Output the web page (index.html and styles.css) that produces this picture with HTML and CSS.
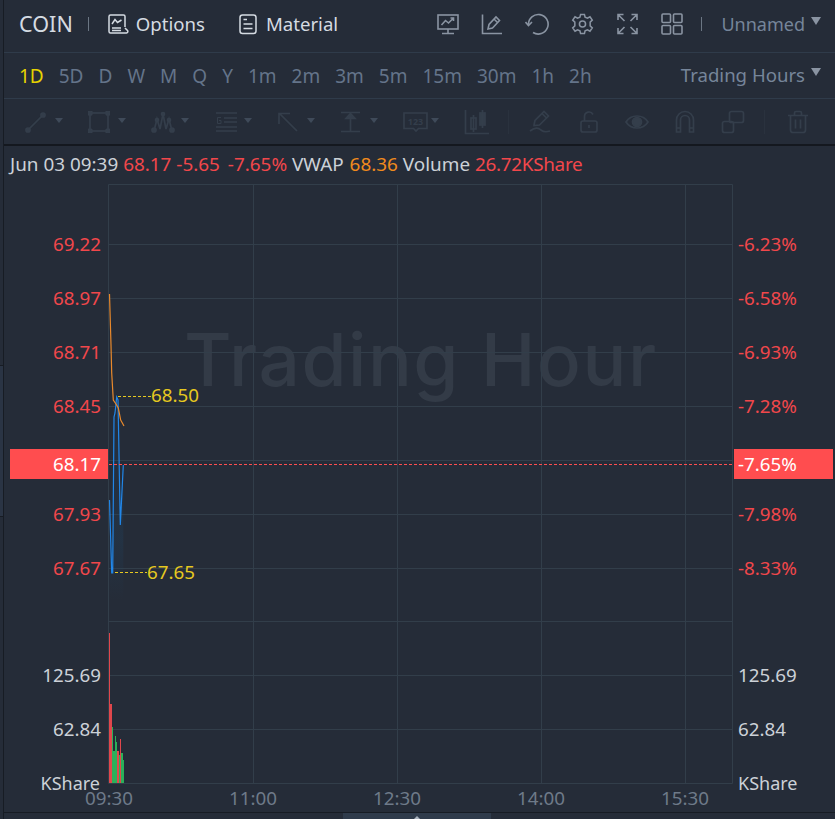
FILE: index.html
```html
<!DOCTYPE html>
<html lang="en">
<head>
  <meta charset="UTF-8">
  <title>COIN Chart</title>
  <link rel="stylesheet" href="styles.css">
</head>
<body>
  <div class="side-strip"><span class="side-tab"></span></div>
  <div class="panel">
    <header class="top-bar">
      <span class="symbol">COIN</span>
      <span class="sep"></span>
      <a class="top-link options">
        <svg class="icon" width="22" height="22" viewBox="0 0 22 22"><path d="M18 14V3.500A1.500 1.500 0 0 0 16.500 2H3.500A1.500 1.500 0 0 0 2 3.500V18.500A1.500 1.500 0 0 0 3.500 20H19.500A1.500 1.500 0 0 0 20.500 17.500L18 15"/><path d="M5 11L8 6.500L10.500 9.500L14.500 7M5 15H14M5 17.500H14"/></svg>
        Options
      </a>
      <a class="top-link material">
        <svg class="icon" width="18" height="22" viewBox="0 0 18 22"><rect x="1" y="2" width="16" height="18.500" rx="2.500"/><path d="M4.500 6.500H8M4.500 11H13.500M4.500 15.500H13.500"/></svg>
        Material
      </a>
      <div class="top-tools">
        <svg class="tool" width="22" height="22" viewBox="0 0 22 22"><rect x="1" y="2" width="20" height="14"/><path d="M4.500 12L8.500 7.500L11.500 10L16.500 5M13.500 5H16.500V8M11 16V20M5 20.500H17"/></svg>
        <svg class="tool" width="22" height="22" viewBox="0 0 22 22"><path d="M1.500 1.500V20.500H21"/><path d="M7 16L8 11.500L15 4L18.500 7.500L11.500 15L7 16ZM13 6L16.500 9.500"/></svg>
        <svg class="tool" width="24" height="24" viewBox="0 0 24 24"><path d="M3.500 12.500A9.800 9.800 0 1 1 8 20.500"/><path d="M0.500 10L3.500 13.500L7 10"/></svg>
        <svg class="tool" width="23" height="24" viewBox="0 0 24 24"><circle cx="12" cy="12" r="3.200"/><path d="M10 2H14L14.700 4.900L17.200 6L19.800 4.500L22.200 8L20 10V14L22.200 16L19.800 19.500L17.200 18L14.700 19.100L14 22H10L9.300 19.100L6.800 18L4.200 19.500L1.800 16L4 14V10L1.800 8L4.200 4.500L6.800 6L9.300 4.900Z"/></svg>
        <svg class="tool" width="23" height="22" viewBox="0 0 22 22"><path d="M1.500 7V1.500H7M1.500 1.500L8 8M15 1.500H20.500V7M20.500 1.500L14 8M1.500 15V20.500H7M1.500 20.500L8 14M15 20.500H20.500V15M20.500 20.500L14 14"/></svg>
        <svg class="tool" width="22" height="22" viewBox="0 0 22 22"><rect x="1" y="1" width="8.500" height="8.500" rx="1"/><rect x="12.500" y="1" width="8.500" height="8.500" rx="1"/><rect x="1" y="12.500" width="8.500" height="8.500" rx="1"/><rect x="12.500" y="12.500" width="8.500" height="8.500" rx="1"/></svg>
      </div>
      <span class="sep sep-right"></span>
      <span class="menu layout-name">Unnamed<i class="caret"></i></span>
    </header>

    <nav class="periods">
      <a class="period active">1D</a>
      <a class="period">5D</a>
      <a class="period">D</a>
      <a class="period">W</a>
      <a class="period">M</a>
      <a class="period">Q</a>
      <a class="period">Y</a>
      <a class="period">1m</a>
      <a class="period">2m</a>
      <a class="period">3m</a>
      <a class="period">5m</a>
      <a class="period">15m</a>
      <a class="period">30m</a>
      <a class="period">1h</a>
      <a class="period">2h</a>
      <span class="menu hours">Trading Hours<i class="caret"></i></span>
    </nav>

    <div class="draw-tools">
      <div class="draw-item"><svg width="22" height="22" viewBox="0 0 22 22"><path d="M3 19L18 4"/><circle class="dot" cx="3" cy="19" r="2"/><circle class="dot" cx="18" cy="4" r="2"/></svg><i class="caret small"></i></div>
      <div class="draw-item"><svg width="22" height="22" viewBox="0 0 22 22"><rect x="2" y="2" width="18" height="18"/><circle class="dot" cx="2" cy="2" r="2"/><circle class="dot" cx="20" cy="2" r="2"/><circle class="dot" cx="2" cy="20" r="2"/><circle class="dot" cx="20" cy="20" r="2"/></svg><i class="caret small"></i></div>
      <div class="draw-item"><svg width="24" height="22" viewBox="0 0 24 22"><path d="M3 20L6 8L9 18L12 3L15 18L18 8L21 20"/><circle class="dot" cx="3" cy="19" r="2"/><circle class="dot" cx="6" cy="9" r="1.500"/><circle class="dot" cx="12" cy="3" r="1.500"/><circle class="dot" cx="18" cy="9" r="1.500"/><circle class="dot" cx="21" cy="19" r="2"/></svg><i class="caret small"></i></div>
      <div class="draw-item"><svg width="24" height="22" viewBox="0 0 24 22"><path d="M2 2H23M10 7H23M10 11H23M2 16H23M2 20H23"/><path class="thin" d="M7 6.500H3.500V12.500H7V9.500H5"/></svg><i class="caret small"></i></div>
      <div class="draw-item"><svg width="22" height="22" viewBox="0 0 22 22"><path d="M2.500 2.500L20 20M2 13V2.500H13"/></svg><i class="caret small"></i></div>
      <div class="draw-item"><svg width="22" height="22" viewBox="0 0 22 22"><path d="M1 1.500H20M1 20.500H20M10.500 5V20"/><path class="solid" d="M10.500 2.500L15 7.500H6Z"/></svg><i class="caret small"></i></div>
      <div class="draw-item item-label"><svg width="26" height="22" viewBox="0 0 26 22"><path d="M1 2H24V17.500H15.500L13 20L10.500 17.500H1Z"/><text class="mini" x="12.500" y="13.500">123</text></svg><i class="caret small"></i></div>
      <svg class="draw-icon" width="26" height="26" viewBox="0 0 26 26"><path d="M1.500 1V24.500H25"/><rect x="7" y="9" width="5" height="11"/><rect class="solid" x="16" y="4" width="5" height="12"/><path d="M9.500 6V23M18.500 1V19"/></svg>
      <span class="draw-sep"></span>
      <div class="draw-group">
        <svg class="draw-icon" width="24" height="24" viewBox="0 0 24 24"><path d="M5 15L6 10.500L15 1.500L19.500 6L10.500 15L5 15.500ZM13 3.500L17.500 8"/><path d="M1 21C6 17 9 17 12 20C15 22.500 18 22 21 21"/></svg>
        <svg class="draw-icon" width="20" height="24" viewBox="0 0 20 24"><rect x="2" y="11" width="16" height="11" rx="2"/><path d="M5.500 11V6.500A4.500 4.500 0 0 1 14 4.500M10 15V18"/></svg>
        <svg class="draw-icon" width="24" height="24" viewBox="0 0 24 24"><path d="M1 12C6 4 18 4 23 12C18 20 6 20 1 12Z"/><circle class="solid" cx="12" cy="12" r="4.500"/></svg>
        <svg class="draw-icon" width="20" height="24" viewBox="0 0 20 24"><path d="M1.500 22V10A8.500 8.500 0 0 1 18.500 10V22H14.500V10A4.500 4.500 0 0 0 5.500 10V22ZM1.500 18H5.500M14.500 18H18.500"/></svg>
        <svg class="draw-icon" width="24" height="24" viewBox="0 0 24 24"><rect x="8.500" y="1.500" width="14" height="11" rx="2"/><rect x="1.500" y="11.500" width="11" height="11" rx="2"/></svg>
      </div>
      <span class="draw-sep sep-trash"></span>
      <svg class="draw-icon" width="22" height="24" viewBox="0 0 22 24"><path d="M1 5.500H21M7.500 5.500V3A1.500 1.500 0 0 1 9 1.500H13A1.500 1.500 0 0 1 14.500 3V5.500M3.500 5.500V20A2.500 2.500 0 0 0 6 22.500H16A2.500 2.500 0 0 0 18.500 20V5.500M8.500 9.500V18.500M13.500 9.500V18.500"/></svg>
    </div>

    <div class="quote-line">
      Jun 03 09:39 <span class="down">68.17</span> <span class="down">-5.65</span> <span class="down pct">-7.65%</span>
      VWAP <span class="vwap">68.36</span> Volume <span class="down volume">26.72KShare</span>
    </div>

    <div class="chart">
      <svg class="chart-svg" width="835" height="630" viewBox="0 183 835 630">
        <defs>
          <linearGradient id="area-fade" x1="0" y1="0" x2="0" y2="1">
            <stop offset="0" stop-color="#1e4a6e" stop-opacity="0.05"/>
            <stop offset="0.7" stop-color="#1e4a6e" stop-opacity="0.22"/>
            <stop offset="1" stop-color="#1e4a6e" stop-opacity="0"/>
          </linearGradient>
        </defs>

        <text class="watermark" x="184" y="386">Trading Hour</text>

        <path class="grid" d="M108.500 184.500H732.500V783.500H108.500ZM109 244.500H732M109 298.500H732M109 352.500H732M109 406.500H732M109 460.500H732M109 514.500H732M109 568.500H732M109 621.500H732M109 675.500H732M109 729.500H732M253.500 184V783M397.500 184V783M541.500 184V783M685.500 184V783"/>

        <path class="area" d="M109.500 500L111.700 573L112.700 573L114 417L116.700 397L118 400L120.300 525L123.300 465V600H109.500Z"/>
        <path class="price-line" d="M109.500 500L111.700 573L112.700 573L114 417L115 413L116.700 397L118 400L120.300 525L123.300 465"/>
        <path class="avg-line" d="M109.500 294L111 345L111.700 373L113.300 400L116 404L118.300 408L120.700 420L124 426"/>

        <path class="high-low" d="M118 396.500H151M115 572.500H147"/>
        <text class="yellow-label" x="151" y="401.500">68.50</text>
        <text class="yellow-label" x="147" y="578.500">67.65</text>

        <path class="last-line" d="M109 464.500H732"/>
        <rect class="last-box" x="10" y="449" width="98" height="30"/>
        <rect class="last-box" x="734" y="449" width="99" height="30"/>
        <text class="axis-left last-text" x="101" y="470.500">68.17</text>
        <text class="axis-right last-text" x="738" y="470.500">-7.65%</text>

        <g class="red-axis">
          <text class="axis-left" x="101" y="250.500">69.22</text>
          <text class="axis-left" x="101" y="304.500">68.97</text>
          <text class="axis-left" x="101" y="358.500">68.71</text>
          <text class="axis-left" x="101" y="412.500">68.45</text>
          <text class="axis-left" x="101" y="520.500">67.93</text>
          <text class="axis-left" x="101" y="574.500">67.67</text>
          <text class="axis-right" x="738" y="250.500">-6.23%</text>
          <text class="axis-right" x="738" y="304.500">-6.58%</text>
          <text class="axis-right" x="738" y="358.500">-6.93%</text>
          <text class="axis-right" x="738" y="412.500">-7.28%</text>
          <text class="axis-right" x="738" y="520.500">-7.98%</text>
          <text class="axis-right" x="738" y="574.500">-8.33%</text>
        </g>

        <g class="vol-bars">
          <rect class="up" x="109" y="633" width="1" height="150"/>
          <rect class="up" x="110" y="704" width="2" height="79"/>
          <rect class="dn" x="112" y="727" width="1" height="56"/>
          <rect class="dn" x="113" y="751" width="2" height="32"/>
          <rect class="dn" x="115" y="736" width="1" height="47"/>
          <rect class="dn" x="116" y="742" width="1" height="41"/>
          <rect class="up" x="117" y="751" width="2" height="32"/>
          <rect class="dn" x="119" y="755" width="1" height="28"/>
          <rect class="up" x="120" y="739" width="1" height="44"/>
          <rect class="dn" x="121" y="753" width="2" height="30"/>
          <rect class="dn" x="123" y="760" width="1" height="23"/>
        </g>

        <g class="vol-axis">
          <text class="axis-left" x="101" y="681.500">125.69</text>
          <text class="axis-left" x="101" y="735.500">62.84</text>
          <text class="axis-left unit" x="100" y="789.500">KShare</text>
          <text class="axis-right" x="738" y="681.500">125.69</text>
          <text class="axis-right" x="738" y="735.500">62.84</text>
          <text class="axis-right unit" x="738" y="789.500">KShare</text>
        </g>

        <g class="time-axis">
          <text x="109" y="805">09:30</text>
          <text x="253" y="805">11:00</text>
          <text x="397" y="805">12:30</text>
          <text x="541" y="805">14:00</text>
          <text x="685" y="805">15:30</text>
        </g>
      </svg>
    </div>

    <div class="bottom-bar"><span class="bottom-tab"><i class="tab-tip"></i></span></div>
  </div>
</body>
</html>
```

FILE: styles.css
```css
html, body {
  margin: 0;
  padding: 0;
  background-color: #252c38;
  overflow: hidden;
}

body {
  width: 835px;
  height: 819px;
  display: flex;
  font-family: "Noto Sans", sans-serif;
}

.side-strip {
  width: 3px;
  flex: none;
  padding-top: 365px;
  box-sizing: border-box;
}

.side-tab {
  display: block;
  height: 150px;
  background-color: #2a3444;
  border-top: 1px solid #171c24;
  border-bottom: 1px solid #171c24;
}

.panel {
  flex: 1;
  min-width: 0;
  height: 819px;
  border-left: 1px solid #171c24;
  box-sizing: border-box;
  display: flex;
  flex-direction: column;
}

.top-bar {
  height: 52px;
  flex: none;
  display: flex;
  align-items: center;
  border-bottom: 1px solid #2f3b4a;
  padding-left: 15px;
  padding-right: 14px;
  color: #d5dbe2;
  font-size: 18.6px;
}

.top-bar > * {
  margin-top: -5px;
}

.symbol {
  font-size: 21.6px;
}

.sep {
  width: 1px;
  height: 14px;
  background-color: #6b7683;
  margin-left: 15px;
  margin-right: 18px;
}

.top-link {
  display: flex;
  align-items: center;
  gap: 7px;
}

.material {
  margin-left: 34px;
  gap: 9px;
}

.icon {
  fill: none;
  stroke: #d5dbe2;
  stroke-width: 1.5;
}

.top-tools {
  margin-left: auto;
  display: flex;
  align-items: center;
  gap: 22px;
}

.tool {
  fill: none;
  stroke: #8a94a2;
  stroke-width: 1.6;
}

.sep-right {
  margin-left: 18px;
  margin-right: 19px;
}

.menu {
  color: #76859a;
  font-size: 18.6px;
  display: flex;
  align-items: center;
  gap: 6px;
}

.layout-name {
  font-size: 18px;
}

.caret {
  width: 0;
  height: 0;
  border-left: 5px solid transparent;
  border-right: 5px solid transparent;
  border-top: 8px solid #8a94a2;
  margin-top: -6px;
}

.periods {
  height: 45px;
  flex: none;
  display: flex;
  align-items: center;
  gap: 15px;
  border-bottom: 1px solid #2f3b4a;
  padding-left: 15px;
  padding-right: 14px;
  font-size: 19px;
  color: #64748a;
}

.active {
  color: #e6d200;
}

.hours {
  margin-left: auto;
  margin-top: -2px;
}

.draw-tools {
  height: 45px;
  flex: none;
  display: flex;
  align-items: center;
  padding-left: 21px;
  border-bottom: 2px solid #14181f;
}

.draw-item {
  width: 63px;
  flex: none;
  display: flex;
  align-items: center;
}

.item-label {
  width: 61px;
}

.draw-item svg,
.draw-icon {
  flex: none;
  fill: none;
  stroke: #343e4b;
  stroke-width: 1.7;
}

.draw-tools .dot,
.draw-tools .solid {
  fill: #343e4b;
}

.draw-tools .thin {
  stroke-width: 1;
}

.draw-tools .mini {
  fill: #343e4b;
  stroke: none;
  font-size: 9px;
  font-weight: 700;
  text-anchor: middle;
}

.caret.small {
  border-left-width: 4px;
  border-right-width: 4px;
  border-top: 5px solid #3f4a59;
  margin-top: -3px;
  margin-left: auto;
  margin-right: 25px;
}

.draw-sep {
  width: 1px;
  height: 24px;
  background-color: #2a323e;
  margin-left: 18px;
  margin-right: 20px;
  flex: none;
}

.draw-group {
  display: flex;
  align-items: center;
  gap: 26px;
}

.sep-trash {
  margin-left: 19px;
  margin-right: 22px;
}

.quote-line {
  height: 37px;
  flex: none;
  padding-left: 6px;
  line-height: 36px;
  font-size: 18.9px;
  color: #ccd1d7;
  white-space: nowrap;
}

.down {
  color: #f1474b;
}

.pct {
  margin-left: 3px;
}

.volume {
  letter-spacing: -0.3px;
}

.vwap {
  color: #f08a1d;
  margin-left: 1px;
}

.chart {
  flex: 1;
  overflow: hidden;
  margin-left: -4px;
}

.chart-svg {
  display: block;
}

.chart text {
  font-family: "Noto Sans", sans-serif;
  font-size: 18.8px;
}

.chart .watermark {
  font-family: "Inter", sans-serif;
  font-size: 73px;
  font-weight: 500;
  letter-spacing: 1.5px;
  fill: #333b47;
}

.grid {
  fill: none;
  stroke: #323e4a;
  stroke-width: 1;
}

.area {
  fill: url(#area-fade);
}

.price-line {
  fill: none;
  stroke: #2186e8;
  stroke-width: 1.2;
}

.avg-line {
  fill: none;
  stroke: #e8892c;
  stroke-width: 1.2;
}

.high-low {
  fill: none;
  stroke: #e6c820;
  stroke-width: 1;
  stroke-dasharray: 3 2;
}

.chart .yellow-label {
  fill: #e6c820;
}

.last-line {
  fill: none;
  stroke: #ff4d4f;
  stroke-width: 1;
  stroke-dasharray: 3 2;
}

.last-box {
  fill: #ff4d4f;
}

.axis-left {
  text-anchor: end;
}

.chart .last-text {
  fill: #ffffff;
}

.red-axis text {
  fill: #f1474b;
}

.vol-axis text {
  fill: #ccd1d7;
}

.chart .unit {
  font-size: 18px;
}

.vol-bars .up {
  fill: #e0474c;
}

.vol-bars .dn {
  fill: #2bb05a;
}

.time-axis text {
  fill: #6e7a89;
  text-anchor: middle;
}

.bottom-bar {
  height: 6px;
  flex: none;
  border-top: 1px solid #171c24;
}

.bottom-tab {
  display: flex;
  justify-content: center;
  align-items: flex-end;
  margin-left: 339px;
  width: 148px;
  height: 6px;
  background-color: #2f3b4b;
}

.tab-tip {
  width: 0;
  height: 0;
  border-left: 3px solid transparent;
  border-right: 3px solid transparent;
  border-bottom: 3px solid #a9b2bd;
}
```
